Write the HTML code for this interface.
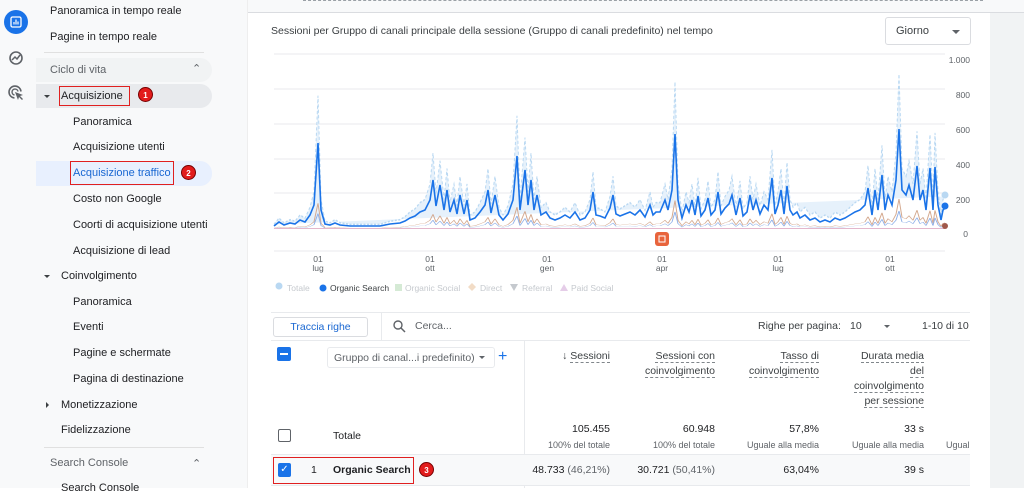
<!DOCTYPE html>
<html><head><meta charset="utf-8"><style>
*{box-sizing:border-box;margin:0;padding:0}
body{width:1024px;height:488px;overflow:hidden;background:#fff;font-family:"Liberation Sans",Arial,sans-serif;color:#202124;position:relative}
.a{position:absolute;white-space:nowrap}
.rail{left:0;top:0;width:36px;height:488px;background:#f8f9fa}
.side{left:36px;top:0;width:212px;height:488px;background:#f8f9fa;border-right:1px solid #eee}
.it{font-size:11px;color:#202124}
.sub{left:73px}
.top{left:61px}
.badge{width:15px;height:15px;border-radius:50%;background:#e21c1c;color:#fff;font-size:8px;font-weight:bold;text-align:center;line-height:15px;border:1px solid #700}
.rb{border:1.5px solid #e02020}
.g{color:#5f6368}
.th{font-size:10.5px;color:#3c4043;text-align:right;line-height:15px}
.th span{border-bottom:1px dashed #80868b}
.n{font-size:10.5px;text-align:right}
.s{font-size:9px;color:#5f6368;text-align:right}
</style></head><body>
<div class="a rail"></div>
<div class="a" style="left:4px;top:10px;width:24px;height:24px;border-radius:50%;background:#1a73e8"></div>
<svg class="a" style="left:10px;top:16px" width="12" height="12"><rect x="1" y="1" width="10" height="10" rx="1.5" fill="none" stroke="#fff" stroke-width="1.3"/><path d="M4 8.5V6M6 8.5V3.5M8 8.5V5.5" stroke="#fff" stroke-width="1.2"/></svg>
<svg class="a" style="left:8px;top:50px" width="16" height="16"><circle cx="8" cy="8" r="6" fill="none" stroke="#5f6368" stroke-width="1.6"/><path d="M4 10l3-3 2 2 3-4" fill="none" stroke="#5f6368" stroke-width="1.5"/></svg>
<svg class="a" style="left:8px;top:85px" width="16" height="16"><path d="M13 6.5A6 6 0 1 0 6.5 13" fill="none" stroke="#5f6368" stroke-width="1.6"/><path d="M10 6.5A3 3 0 1 0 6.5 10" fill="none" stroke="#5f6368" stroke-width="1.4"/><path d="M7 7l8 3-3 1 3 3-1 1-3-3-1 3z" fill="#5f6368"/></svg>
<div class="a side"></div>
<div class="a it" style="left:50px;top:5px">Panoramica in tempo reale</div>
<div class="a it" style="left:50px;top:31px">Pagine in tempo reale</div>
<div class="a" style="left:44px;top:52px;width:160px;height:1px;background:#e0e0e0"></div>
<div class="a" style="left:36px;top:58px;width:176px;height:24px;background:#f1f3f4;border-radius:0 12px 12px 0"></div>
<div class="a it g" style="left:50px;top:64px">Ciclo di vita</div>
<div class="a g" style="left:192px;top:62px;font-size:11px">&#8963;</div>
<div class="a" style="left:36px;top:84px;width:176px;height:24px;background:#e8eaed;border-radius:0 12px 12px 0"></div>
<div class="a" style="left:44px;top:95px;border:3px solid transparent;border-top:3px solid #3c4043"></div>
<div class="a rb" style="left:59px;top:86px;width:71px;height:20px"></div>
<div class="a it top" style="top:90px">Acquisizione</div>
<div class="a badge" style="left:138px;top:87px">1</div>
<div class="a it sub" style="top:116px">Panoramica</div>
<div class="a it sub" style="top:141px">Acquisizione utenti</div>
<div class="a" style="left:36px;top:161px;width:176px;height:25px;background:#e8f0fe;border-radius:0 12px 12px 0"></div>
<div class="a rb" style="left:70px;top:161px;width:104px;height:24px"></div>
<div class="a it sub" style="top:167px;color:#1967d2">Acquisizione traffico</div>
<div class="a badge" style="left:181px;top:165px">2</div>
<div class="a it sub" style="top:193px">Costo non Google</div>
<div class="a it sub" style="top:219px">Coorti di acquisizione utenti</div>
<div class="a it sub" style="top:245px">Acquisizione di lead</div>
<div class="a" style="left:44px;top:275px;border:3px solid transparent;border-top:3px solid #3c4043"></div>
<div class="a it top" style="top:270px">Coinvolgimento</div>
<div class="a it sub" style="top:296px">Panoramica</div>
<div class="a it sub" style="top:321px">Eventi</div>
<div class="a it sub" style="top:347px">Pagine e schermate</div>
<div class="a it sub" style="top:373px">Pagina di destinazione</div>
<div class="a" style="left:46px;top:402px;border:3px solid transparent;border-left:3px solid #3c4043"></div>
<div class="a it top" style="top:399px">Monetizzazione</div>
<div class="a it top" style="top:424px">Fidelizzazione</div>
<div class="a" style="left:44px;top:447px;width:160px;height:1px;background:#e0e0e0"></div>
<div class="a it g" style="left:50px;top:457px">Search Console</div>
<div class="a g" style="left:192px;top:457px;font-size:11px">&#8963;</div>
<div class="a it" style="left:61px;top:482px">Search Console</div>

<div class="a" style="left:248px;top:0;width:776px;height:13px;background:#f8f9fa;border-bottom:1px solid #dadce0"></div>
<div class="a" style="left:303px;top:0;width:680px;border-top:1px dashed #9aa0a6"></div>
<div class="a" style="left:990px;top:13px;width:34px;height:475px;background:#f1f3f4"></div>
<div class="a" style="left:271px;top:25px;font-size:10.5px;color:#3c4043">Sessioni per Gruppo di canali principale della sessione (Gruppo di canali predefinito) nel tempo</div>
<div class="a" style="left:885px;top:17px;width:86px;height:28px;border:1px solid #dadce0;border-radius:3px"></div>
<div class="a" style="left:896px;top:25px;font-size:11px;color:#3c4043">Giorno</div>
<div class="a" style="left:952px;top:30px;border:4px solid transparent;border-top:4px solid #5f6368"></div>

<svg class="a" style="left:0;top:0" width="1024" height="300">
<g stroke="#e8eaed" stroke-width="1"><line x1="274" x2="945" y1="54" y2="54"/><line x1="274" x2="945" y1="89" y2="89"/><line x1="274" x2="945" y1="124" y2="124"/><line x1="274" x2="945" y1="159" y2="159"/><line x1="274" x2="945" y1="193" y2="193"/><line x1="274" x2="945" y1="251" y2="251"/></g>
<g font-size="8.5" fill="#5f6368" text-anchor="end" font-family="Liberation Sans"><text x="970" y="63">1.000</text><text x="970" y="98">800</text><text x="970" y="133">600</text><text x="970" y="168">400</text><text x="970" y="203">200</text><text x="968" y="237">0</text></g>
<defs><polyline id="L" points="274,226 279,222 284,225 290,223 295,224 300,220 305,222 310,215 314,205 318,143 321,210 325,224 330,225 335,223 340,225 350,226 360,226 370,226 380,226 390,224 400,223 405,221 410,218 415,216 420,212 425,210 430,200 433,180 436,206 440,185 444,210 447,190 450,212 454,200 457,214 460,195 464,214 467,200 470,220 475,218 480,212 485,205 488,190 491,213 495,195 499,215 503,220 508,214 513,200 517,156 520,210 525,170 528,205 531,180 534,210 537,195 541,215 546,212 550,218 555,220 560,218 565,215 570,218 575,212 580,220 585,218 590,210 593,192 596,215 600,216 605,218 610,208 613,195 616,214 620,216 625,214 630,212 635,215 640,210 645,217 650,205 653,215 656,212 660,212 665,200 668,210 672,190 675,134 678,200 682,218 686,205 689,212 692,200 695,215 698,196 701,216 705,210 708,198 711,215 715,210 718,192 721,214 725,208 729,204 732,195 736,215 740,198 743,216 747,212 750,195 753,210 756,200 760,214 764,205 768,210 772,178 775,214 778,205 781,190 784,214 787,186 790,210 793,215 797,212 800,218 805,215 810,220 815,218 820,222 825,220 830,222 835,218 840,220 845,218 850,215 855,212 860,210 865,205 868,188 872,215 875,190 878,210 882,175 885,210 888,195 892,205 896,180 899,129 902,190 906,195 909,185 913,200 917,166 920,200 923,190 926,210 930,168 933,210 935,167 938,205 941,220 943,210 945,208"/></defs>
<g transform="translate(0,229) scale(1,1.55) translate(0,-229)"><use href="#L" fill="#e6f1fb" stroke="#b9d8f2" stroke-width="1" stroke-dasharray="2 1.5" vector-effect="non-scaling-stroke"/></g>
<g transform="translate(0,229) scale(1,0.3) translate(0,-229)"><use href="#L" fill="none" stroke="#d4a98f" stroke-width="1" vector-effect="non-scaling-stroke"/></g>
<g transform="translate(0,229) scale(1,0.18) translate(0,-229)"><use href="#L" fill="none" stroke="#8fb0e8" stroke-width="1" vector-effect="non-scaling-stroke"/></g>
<line x1="274" x2="945" y1="228.5" y2="228.5" stroke="#e3b7cc" stroke-width="1"/>
<use href="#L" fill="none" stroke="#1a73e8" stroke-width="1.6"/>
<circle cx="945" cy="195" r="3.5" fill="#b9d8f2"/><circle cx="945" cy="206" r="3.5" fill="#1a73e8"/><circle cx="945" cy="226" r="3" fill="#a0584a"/>
<rect x="655" y="232" width="14" height="14" rx="3" fill="#e8643c"/><rect x="659" y="236" width="6" height="6" fill="none" stroke="#fff" stroke-width="1"/>
<g font-size="8.5" fill="#5f6368" text-anchor="middle" font-family="Liberation Sans"><text x="318" y="262">01</text><text x="318" y="271">lug</text><text x="430" y="262">01</text><text x="430" y="271">ott</text><text x="547" y="262">01</text><text x="547" y="271">gen</text><text x="662" y="262">01</text><text x="662" y="271">apr</text><text x="778" y="262">01</text><text x="778" y="271">lug</text><text x="890" y="262">01</text><text x="890" y="271">ott</text></g>
<g font-size="8.5" font-family="Liberation Sans" fill="#c5c9ce"><circle cx="279" cy="286" r="3.5" fill="#b9d8f2"/><text x="287" y="291">Totale</text><circle cx="323" cy="288" r="3.5" fill="#1a73e8"/><text x="330" y="291" fill="#3c4043">Organic Search</text><rect x="395" y="284" width="7" height="7" fill="#d5ead5"/><text x="405" y="291">Organic Social</text><path d="M472 283l4 4-4 4-4-4z" fill="#f2dcc6"/><text x="480" y="291">Direct</text><path d="M510 284h8l-4 7z" fill="#c5c9ce"/><text x="522" y="291">Referral</text><path d="M560 291h8l-4-7z" fill="#e5cde8"/><text x="571" y="291">Paid Social</text></g>
</svg>

<div class="a" style="left:271px;top:312px;width:699px;height:1px;background:#e8eaed"></div>
<div class="a" style="left:273px;top:317px;width:95px;height:20px;border:1px solid #dadce0;border-radius:3px;font-size:10.5px;color:#1967d2;text-align:center;line-height:18px">Traccia righe</div>
<div class="a" style="left:381px;top:313px;width:1px;height:27px;background:#e8eaed"></div>
<svg class="a" style="left:393px;top:320px" width="13" height="13"><circle cx="5" cy="5" r="4" fill="none" stroke="#5f6368" stroke-width="1.4"/><path d="M8 8l4 4" stroke="#5f6368" stroke-width="1.5"/></svg>
<div class="a" style="left:415px;top:320px;font-size:10.5px;color:#5f6368">Cerca...</div>
<div class="a" style="left:758px;top:320px;font-size:10.5px;color:#3c4043">Righe per pagina:</div>
<div class="a" style="left:850px;top:320px;font-size:10.5px;color:#3c4043">10</div>
<div class="a" style="left:884px;top:325px;border:3.5px solid transparent;border-top:3.5px solid #5f6368"></div>
<div class="a" style="left:922px;top:320px;font-size:10.5px;color:#3c4043">1-10 di 10</div>
<div class="a" style="left:271px;top:340px;width:699px;height:1px;background:#e8eaed"></div>
<div class="a" style="left:524px;top:341px;width:1px;height:147px;background:#e8eaed"></div>
<div class="a" style="left:277px;top:347px;width:14px;height:14px;background:#1a73e8;border-radius:2px"></div>
<div class="a" style="left:280px;top:353px;width:8px;height:2px;background:#fff"></div>
<div class="a" style="left:327px;top:347px;width:168px;height:21px;border:1px solid #e8eaed;border-radius:3px;font-size:10.5px;color:#5f6368;padding:4px 6px">Gruppo di canal...i predefinito)</div>
<div class="a" style="left:479px;top:356px;border:3px solid transparent;border-top:3px solid #5f6368"></div>
<div class="a" style="left:498px;top:348px;font-size:16px;color:#1a73e8">+</div>
<div class="a th" style="left:540px;top:349px;width:70px"><b style="font-weight:normal">&#8595;</b> <span>Sessioni</span></div>
<div class="a th" style="left:625px;top:349px;width:90px"><span>Sessioni con</span><br><span>coinvolgimento</span></div>
<div class="a th" style="left:730px;top:349px;width:89px"><span>Tasso di</span><br><span>coinvolgimento</span></div>
<div class="a th" style="left:835px;top:349px;width:89px"><span>Durata media</span><br><span>del</span><br><span>coinvolgimento</span><br><span>per sessione</span></div>
<div class="a" style="left:278px;top:429px;width:13px;height:13px;border:1.5px solid #5f6368;border-radius:2px"></div>
<div class="a" style="left:333px;top:430px;font-size:10.5px">Totale</div>
<div class="a n" style="left:540px;top:423px;width:70px">105.455</div>
<div class="a s" style="left:520px;top:440px;width:90px">100% del totale</div>
<div class="a n" style="left:640px;top:423px;width:75px">60.948</div>
<div class="a s" style="left:625px;top:440px;width:90px">100% del totale</div>
<div class="a n" style="left:740px;top:423px;width:79px">57,8%</div>
<div class="a s" style="left:720px;top:440px;width:99px">Uguale alla media</div>
<div class="a n" style="left:850px;top:423px;width:74px">33 s</div>
<div class="a s" style="left:825px;top:440px;width:99px">Uguale alla media</div>
<div class="a s" style="left:946px;top:440px;text-align:left">Ugual</div>
<div class="a" style="left:271px;top:454px;width:699px;height:1px;background:#e8eaed"></div>
<div class="a" style="left:271px;top:455px;width:699px;height:30px;background:#f8f9fa"></div>
<div class="a" style="left:271px;top:485px;width:699px;height:1px;background:#e8eaed"></div>
<div class="a rb" style="left:273px;top:457px;width:141px;height:27px"></div>
<div class="a" style="left:278px;top:463px;width:13px;height:14px;background:#1a73e8;border-radius:2px;color:#fff;font-size:10px;text-align:center;line-height:14px">&#10003;</div>
<div class="a" style="left:311px;top:464px;font-size:10.5px">1</div>
<div class="a" style="left:333px;top:464px;font-size:10.5px;font-weight:bold">Organic Search</div>
<div class="a badge" style="left:419px;top:462px">3</div>
<div class="a n" style="left:520px;top:464px;width:90px">48.733 <span style="color:#5f6368">(46,21%)</span></div>
<div class="a n" style="left:620px;top:464px;width:95px">30.721 <span style="color:#5f6368">(50,41%)</span></div>
<div class="a n" style="left:740px;top:464px;width:79px">63,04%</div>
<div class="a n" style="left:850px;top:464px;width:74px">39 s</div>
</body></html>
